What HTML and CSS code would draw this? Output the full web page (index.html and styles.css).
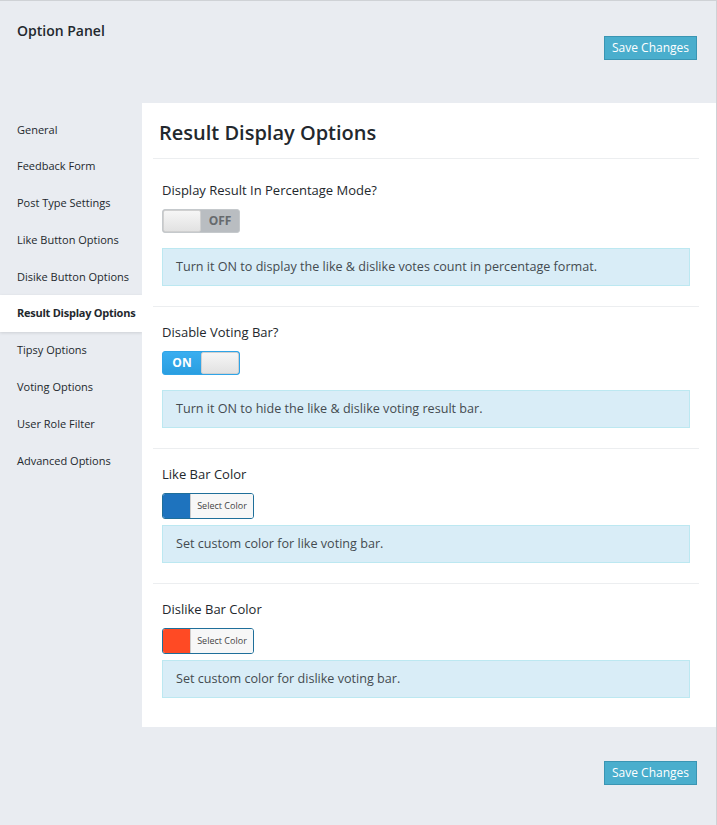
FILE: index.html
```html
<!DOCTYPE html>
<html>
<head>
<meta charset="utf-8">
<link rel="stylesheet" href="styles.css">
</head>
<body>
<div class="page">
  <div class="header">
    <h1 class="panel-title">Option Panel</h1>
    <button class="save-btn">Save Changes</button>
  </div>
  <div class="body">
    <ul class="sidebar">
      <li>General</li>
      <li>Feedback Form</li>
      <li>Post Type Settings</li>
      <li>Like Button Options</li>
      <li>Disike Button Options</li>
      <li class="active">Result Display Options</li>
      <li>Tipsy Options</li>
      <li>Voting Options</li>
      <li>User Role Filter</li>
      <li>Advanced Options</li>
    </ul>
    <div class="main">
      <h2 class="main-title">Result Display Options</h2>
      <div class="section first">
        <div class="label">Display Result In Percentage Mode?</div>
        <div class="toggle off"><span class="knob"></span><span class="state">OFF</span></div>
        <div class="info">Turn it ON to display the like &amp; dislike votes count in percentage format.</div>
      </div>
      <div class="section">
        <div class="label">Disable Voting Bar?</div>
        <div class="toggle on"><span class="state">ON</span><span class="knob"></span></div>
        <div class="info">Turn it ON to hide the like &amp; dislike voting result bar.</div>
      </div>
      <div class="section">
        <div class="label">Like Bar Color</div>
        <div class="picker"><span class="swatch like"></span><span class="pick-text">Select Color</span></div>
        <div class="info tight">Set custom color for like voting bar.</div>
      </div>
      <div class="section last">
        <div class="label">Dislike Bar Color</div>
        <div class="picker"><span class="swatch dislike"></span><span class="pick-text">Select Color</span></div>
        <div class="info tight">Set custom color for dislike voting bar.</div>
      </div>
    </div>
  </div>
  <div class="footer">
    <button class="save-btn">Save Changes</button>
  </div>
</div>
</body>
</html>
```
FILE: styles.css
```css
* { box-sizing: border-box; }
html, body { margin: 0; padding: 0; }
body {
  background: #e9ecf1;
  font-family: "Open Sans", "Noto Sans", sans-serif;
  color: #23282d;
}
.page {
  width: 717px;
  min-height: 825px;
  border-top: 1px solid #cfd2d6;
  border-right: 1px solid #cfd2d6;
}
.header {
  height: 102px;
  display: flex;
  justify-content: space-between;
  align-items: flex-start;
  padding: 20px 19px 0 17px;
}
.panel-title {
  margin: 0;
  font-size: 14px;
  line-height: 20px;
  font-weight: 600;
  color: #23282d;
}
.save-btn {
  margin-top: 15px;
  width: 93px;
  height: 24px;
  background: #4aaecd;
  border: 1px solid #3a95b3;
  border-radius: 0;
  color: #fff;
  font-family: inherit;
  font-size: 12px;
  padding: 0;
  line-height: 22px;
}
.body {
  display: flex;
  align-items: flex-start;
}
.sidebar {
  list-style: none;
  margin: 0;
  padding: 8.5px 0 0 0;
  width: 142px;
  flex: none;
}
.sidebar li {
  padding: 10px 0 10px 17px;
  font-size: 11px;
  line-height: 16.8px;
  color: #23282d;
  white-space: nowrap;
}
.sidebar li.active {
  background: #fff;
  font-weight: 700;
  box-shadow: 0 1px 3px rgba(0,0,0,0.12);
  letter-spacing: -0.25px;
}
.main {
  flex: 1;
  background: #fff;
  padding: 0 17px 0 11px;
}
.main-title {
  margin: 0;
  padding: 16px 0 11px 6px;
  font-size: 20px;
  line-height: 28px;
  font-weight: 600;
  color: #23282d;
  border-bottom: 1px solid #eceef0;
}
.section {
  padding: 16px 9px 20px 9px;
  border-bottom: 1px solid #eceef0;
}
.section.first { padding-top: 22px; }
.section.last { border-bottom: none; padding-bottom: 29px; }
.label {
  font-size: 13px;
  line-height: 18px;
  font-weight: 500;
  color: #23282d;
}
.toggle {
  margin-top: 10px;
  width: 78px;
  height: 24px;
  border-radius: 3px;
  display: flex;
  overflow: hidden;
  border: 1px solid #c5c9cc;
}
.toggle .knob {
  width: 38px;
  flex: none;
  background: linear-gradient(#f6f6f6, #e2e2e2);
  border-radius: 2px;
  border: 1px solid #d0d0d0;
}
.toggle .state {
  flex: 1;
  font-size: 12px;
  font-weight: 700;
  line-height: 22px;
  text-align: center;
}
.toggle.off { background: #b9bdc1; }
.toggle.off .state { color: #666a6d; }
.toggle.on { background: #2fa4e7; border-color: #2fa4e7; }
.toggle.on .state { color: #fff; background: linear-gradient(#3aaef0, #2a9ee0); }
.info {
  margin-top: 15px;
  height: 38px;
  background: #d9edf7;
  border: 1px solid #bce8f1;
  padding: 0 13px;
  font-size: 12.6px;
  line-height: 36px;
  color: #444b50;
}
.info.tight { margin-top: 6px; }
.picker {
  margin-top: 10px;
  width: 92px;
  height: 26px;
  display: flex;
  border: 1px solid #1f6f9a;
  border-radius: 3px;
  overflow: hidden;
}
.swatch { width: 27px; flex: none; }
.swatch.like { background: #1e73be; }
.swatch.dislike { background: #ff4a24; }
.pick-text {
  flex: 1;
  background: #f7f7f7;
  border-left: 1px solid #ccc;
  font-size: 9px;
  line-height: 24px;
  text-align: center;
  color: #444;
}
.footer {
  display: flex;
  justify-content: flex-end;
  padding: 19px 19px 0 0;
}
```
